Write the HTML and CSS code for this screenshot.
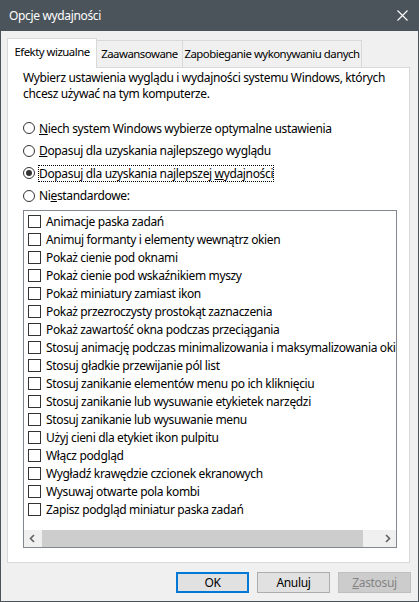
FILE: index.html
```html
<!DOCTYPE html>
<html lang="pl">
<head>
  <meta charset="UTF-8" />
  <meta name="viewport" content="width=device-width, initial-scale=1.0"/>
  <title>Opcje wydajności</title>
  <link rel="stylesheet" href="styles.css">
</head>
<body>

<div class="window">
  <div class="titlebar">
    <span class="title">Opcje wydajności</span>
    <svg class="close" width="11" height="11" viewBox="0 0 11 11">
      <path d="M0.5 0.5 L10.5 10.5 M10.5 0.5 L0.5 10.5" stroke="#ffffff" stroke-width="1.1" fill="none"/>
    </svg>
  </div>

  <div class="dialog">
    <div class="tabs">
      <div class="tab tab-visual active">Efekty wizualne</div>
      <div class="tab tab-advanced">Zaawansowane</div>
      <div class="tab tab-dep">Zapobieganie wykonywaniu danych</div>
    </div>

    <div class="panel">
      <p class="intro">Wybierz ustawienia wyglądu i wydajności systemu Windows, których<br>chcesz używać na tym komputerze.</p>

      <div class="radios">
        <div class="radio"><span class="circle"></span><span class="label"><u>N</u>iech system Windows wybierze optymalne ustawienia</span></div>
        <div class="radio"><span class="circle"></span><span class="label"><u>D</u>opasuj dla uzyskania najlepszego wyglądu</span></div>
        <div class="radio checked"><span class="circle"></span><span class="label focus">Dopasuj dla uzyskania najlepszej <u>w</u>ydajności</span></div>
        <div class="radio"><span class="circle"></span><span class="label">Ni<u>e</u>standardowe:</span></div>
      </div>

      <div class="list">
        <div class="items">
          <div class="item"><span class="box"></span>Animacje paska zadań</div>
          <div class="item"><span class="box"></span>Animuj formanty i elementy wewnątrz okien</div>
          <div class="item"><span class="box"></span>Pokaż cienie pod oknami</div>
          <div class="item"><span class="box"></span>Pokaż cienie pod wskaźnikiem myszy</div>
          <div class="item"><span class="box"></span>Pokaż miniatury zamiast ikon</div>
          <div class="item"><span class="box"></span>Pokaż przezroczysty prostokąt zaznaczenia</div>
          <div class="item"><span class="box"></span>Pokaż zawartość okna podczas przeciągania</div>
          <div class="item"><span class="box"></span>Stosuj animację podczas minimalizowania i maksymalizowania okien</div>
          <div class="item"><span class="box"></span>Stosuj gładkie przewijanie pól list</div>
          <div class="item"><span class="box"></span>Stosuj zanikanie elementów menu po ich kliknięciu</div>
          <div class="item"><span class="box"></span>Stosuj zanikanie lub wysuwanie etykietek narzędzi</div>
          <div class="item"><span class="box"></span>Stosuj zanikanie lub wysuwanie menu</div>
          <div class="item"><span class="box"></span>Użyj cieni dla etykiet ikon pulpitu</div>
          <div class="item"><span class="box"></span>Włącz podgląd</div>
          <div class="item"><span class="box"></span>Wygładź krawędzie czcionek ekranowych</div>
          <div class="item"><span class="box"></span>Wysuwaj otwarte pola kombi</div>
          <div class="item"><span class="box"></span>Zapisz podgląd miniatur paska zadań</div>
        </div>
        <div class="hscroll">
          <span class="arrow">
            <svg width="17" height="17" viewBox="0 0 17 17"><path d="M10 5 L6.5 8.5 L10 12" stroke="#606060" stroke-width="1.6" fill="none"/></svg>
          </span>
          <span class="track"><span class="thumb"></span></span>
          <span class="arrow">
            <svg width="17" height="17" viewBox="0 0 17 17"><path d="M7 5 L10.5 8.5 L7 12" stroke="#606060" stroke-width="1.6" fill="none"/></svg>
          </span>
        </div>
      </div>
    </div>

    <div class="buttons">
      <button class="btn default">OK</button>
      <button class="btn">Anuluj</button>
      <button class="btn disabled"><u>Z</u>astosuj</button>
    </div>
  </div>
</div>

</body>
</html>
```

FILE: styles.css
```css
* {
  margin: 0;
  padding: 0;
  box-sizing: border-box;
}

body {
  background: #f0f0f0;
  font-family: 'Noto Sans', 'Open Sans', sans-serif;
  font-size: 12px;
  letter-spacing: -0.35px;
  color: #000;
}

.window {
  width: 419px;
  height: 602px;
  display: flex;
  flex-direction: column;
  background: #f0f0f0;
  border: 1px solid #4b545b;
  border-top: none;
}

/* Pasek tytułu */
.titlebar {
  height: 31px;
  flex-shrink: 0;
  display: flex;
  align-items: center;
  justify-content: space-between;
  padding: 0 10px 0 8px;
  background: #4b545b;
  color: #fff;
}

.title {
  line-height: 16px;
}

.close {
  display: block;
  margin-top: -1px;
}

.dialog {
  flex: 1;
  display: flex;
  flex-direction: column;
  padding: 7px 8px 0 6px;
}

/* Zakładki */
.tabs {
  display: flex;
  align-items: flex-end;
  height: 30px;
  margin-bottom: -1px;
}

.tab {
  height: 27px;
  margin-bottom: 1px;
  font-size: 11.4px;
  line-height: 25px;
  text-align: center;
  letter-spacing: -0.5px;
  border: 1px solid #d9d9d9;
  border-bottom: none;
  border-left: none;
  background: #f0f0f0;
  white-space: nowrap;
}

.tab.active {
  position: relative;
  z-index: 1;
  height: 30px;
  margin-bottom: 0;
  line-height: 26px;
  background: #fff;
  border-left: 1px solid #d9d9d9;
}

.tab-visual { width: 90px; }
.tab-advanced { width: 86px; }
.tab-dep { width: 179px; }

.panel {
  height: 496px;
  flex-shrink: 0;
  display: flex;
  flex-direction: column;
  background: #fff;
  border: 1px solid #d9d9d9;
}

.intro {
  padding: 2px 0 0 15px;
  line-height: 16px;
}

/* Przyciski opcji */
.radios {
  margin: 15px 0 0 15px;
}

.radio {
  height: 22.5px;
  display: flex;
  align-items: center;
}

.circle {
  width: 12px;
  height: 12px;
  margin-right: 4px;
  border: 1px solid #333;
  border-radius: 50%;
  background: #fff;
  display: flex;
  align-items: center;
  justify-content: center;
}

.radio.checked .circle::after {
  content: "";
  width: 6px;
  height: 6px;
  border-radius: 50%;
  background: #333;
}

.label {
  line-height: 15px;
  white-space: nowrap;
}

.label.focus {
  outline: 1px dotted #000;
  outline-offset: 0;
}

/* Lista pól wyboru */
.list {
  height: 338px;
  margin: 3px 12px 0 15px;
  display: flex;
  flex-direction: column;
  border: 1px solid #828790;
  background: #fff;
}

.items {
  flex: 1;
  overflow: hidden;
  padding-top: 1px;
}

.item {
  height: 18px;
  display: flex;
  align-items: center;
  padding-left: 4px;
  white-space: nowrap;
}

.box {
  width: 13px;
  height: 13px;
  flex-shrink: 0;
  margin-right: 5px;
  border: 1px solid #333;
  background: #fff;
}

.hscroll {
  height: 17px;
  flex-shrink: 0;
  display: flex;
  background: #f0f0f0;
}

.arrow {
  width: 17px;
  height: 17px;
  flex-shrink: 0;
}

.arrow svg {
  display: block;
}

.track {
  flex: 1;
  display: flex;
  padding-right: 16px;
}

.thumb {
  flex: 1;
  margin-left: 1px;
  background: #cdcdcd;
}

/* Przyciski */
.buttons {
  display: flex;
  justify-content: flex-end;
  gap: 8px;
  margin-top: 9px;
  margin-right: -1px;
}

.btn {
  width: 73px;
  height: 21px;
  font-family: inherit;
  font-size: 12px;
  letter-spacing: inherit;
  color: #000;
  background: #e1e1e1;
  border: 1px solid #adadad;
}

.btn.default {
  border: 2px solid #0078d7;
}

.btn.disabled {
  color: #838383;
  background: #cccccc;
  border-color: #bfbfbf;
}
```
